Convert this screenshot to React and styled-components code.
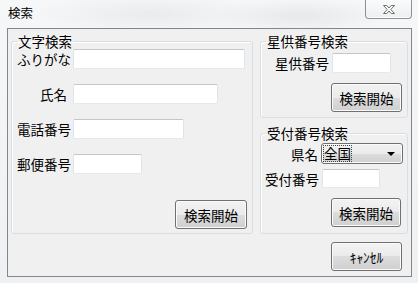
import React from "react";
import styled, { createGlobalStyle } from "styled-components";

const GlobalStyle = createGlobalStyle`
  html, body {
    margin: 0;
    padding: 0;
    background: #ffffff;
  }
  body {
    font-family: "Noto Sans CJK JP", "Noto Sans", sans-serif;
  }
`;

const Window = styled.div`
  width: 418px;
  height: 283px;
  display: flex;
  flex-direction: column;
  box-sizing: border-box;
  background:
    radial-gradient(ellipse 120px 20px at 150px 14px, #e9ebed 0%, rgba(233, 235, 237, 0) 100%),
    radial-gradient(ellipse 90px 18px at 300px 16px, #e6e8ea 0%, rgba(230, 232, 234, 0) 100%),
    linear-gradient(#f6f7f8, #eef0f2);
  font-family: "Noto Sans CJK JP", "Noto Sans", sans-serif;
  color: #000;
`;

const TitleBar = styled.div`
  height: 28px;
  display: flex;
  justify-content: space-between;
  align-items: flex-start;
  padding-left: 8px;
`;

const Title = styled.span`
  margin-top: 5px;
  font-size: 12.5px;
  line-height: 16px;
`;

const CloseButton = styled.div`
  width: 47px;
  height: 19px;
  margin-right: 6px;
  box-sizing: border-box;
  border: 1px solid #8e9094;
  border-top: none;
  border-radius: 0 0 4px 4px;
  background: linear-gradient(#fbfbfb, #eceef0);
  box-shadow: inset 0 -1px 0 #ffffff;
  display: flex;
  align-items: center;
  justify-content: center;
`;

const Client = styled.div`
  margin: 0 6px 0 7px;
  height: 249px;
  box-sizing: border-box;
  border: 1px solid #848689;
  background: #f0f0f0;
  padding: 4px 3px 0;
  display: grid;
  grid-template-columns: 242px 148px;
  grid-template-rows: 85px 109px auto;
  grid-template-areas:
    "text star"
    "text recv"
    "foot foot";
  column-gap: 7px;
  row-gap: 7px;
`;

const Group = styled.fieldset`
  grid-area: ${(p) => p.$area};
  margin: 0;
  padding: 0;
  min-width: 0;
  border: 1px solid #d5dfe5;
  border-radius: 3px;
  box-shadow: inset 1px 1px 0 #ffffff;
  display: flex;
  flex-direction: column;
`;

const Legend = styled.legend`
  margin-left: 5px;
  padding: 0 1px;
  font-size: 13.5px;
  line-height: 16px;
`;

const FormGrid = styled.div`
  display: grid;
  grid-template-columns: 56px auto;
  row-gap: 15px;
  padding-left: 5px;
  align-items: center;
`;

const Label = styled.span`
  font-size: 13.5px;
  line-height: 16px;
  white-space: nowrap;
  text-align: ${(p) => (p.$right ? "right" : "left")};
  padding-right: ${(p) => p.$padRight || 0}px;
`;

const TextBox = styled.div`
  width: ${(p) => p.$w}px;
  height: ${(p) => p.$h || 20}px;
  box-sizing: border-box;
  background: #ffffff;
  border: 1px solid;
  border-color: #c3c7cd #e2e3ea #e3e9ef #e2e3ea;
  border-radius: 2px;
`;

const Row = styled.div`
  display: flex;
  align-items: center;
  gap: ${(p) => p.$gap || 3}px;
  padding-left: ${(p) => p.$indent}px;
  margin-top: ${(p) => p.$top || 0}px;
`;

const Button = styled.div`
  width: ${(p) => p.$w}px;
  height: 29px;
  box-sizing: border-box;
  border: 1px solid #707070;
  border-radius: 3px;
  background: linear-gradient(#f2f2f2 0%, #ebebeb 50%, #dddddd 50%, #cfcfcf 100%);
  box-shadow: inset 0 0 0 1px #fbfbfb;
  display: flex;
  align-items: center;
  justify-content: center;
  font-size: 13.5px;
  line-height: 16px;
  margin-left: auto;
  margin-top: ${(p) => (p.$top === "auto" ? "auto" : `${p.$top || 0}px`)};
  margin-right: ${(p) => p.$right || 5}px;
  margin-bottom: ${(p) => p.$bottom || 0}px;
`;

const Combo = styled.div`
  width: 82px;
  height: 21px;
  box-sizing: border-box;
  border: 1px solid #707070;
  border-radius: 3px;
  background: linear-gradient(#f2f2f2 0%, #ebebeb 50%, #dddddd 50%, #cfcfcf 100%);
  box-shadow: inset 0 0 0 1px #fbfbfb;
  display: flex;
  align-items: center;
  justify-content: space-between;
  padding: 0 7px 0 2px;
`;

const ComboText = styled.span`
  font-size: 13.5px;
  line-height: 15px;
  outline: 1px dotted #444;
  outline-offset: 0;
`;

const Arrow = styled.span`
  width: 0;
  height: 0;
  border-left: 4px solid transparent;
  border-right: 4px solid transparent;
  border-top: 4px solid #000;
`;

const Footer = styled.div`
  grid-area: foot;
  display: flex;
  align-items: flex-start;
  padding-top: 1px;
`;

const CloseGlyph = () => (
  <svg width="14" height="11" viewBox="0 0 14 11">
    <path
      d="M1.5 1.5 L4.8 1.5 L7 4 L9.2 1.5 L12.5 1.5 L8.8 5.5 L12.5 9.5 L9.2 9.5 L7 7 L4.8 9.5 L1.5 9.5 L5.2 5.5 Z"
      fill="#fafafa"
      stroke="#6e6e6e"
      strokeWidth="1"
      strokeLinejoin="round"
    />
  </svg>
);

const App = () => {
  return (
    <>
      <GlobalStyle />
      <Window>
        <TitleBar>
          <Title>検索</Title>
          <CloseButton>
            <CloseGlyph />
          </CloseButton>
        </TitleBar>
        <Client>
          <Group $area="text">
            <Legend>文字検索</Legend>
            <FormGrid>
              <Label>ふりがな</Label>
              <TextBox $w={172} />
              <Label $right $padRight={6}>
                氏名
              </Label>
              <TextBox $w={145} />
              <Label>電話番号</Label>
              <TextBox $w={111} />
              <Label>郵便番号</Label>
              <TextBox $w={69} />
            </FormGrid>
            <Button $w={72} $top="auto" $right={5} $bottom={4}>
              検索開始
            </Button>
          </Group>

          <Group $area="star">
            <Legend>星供番号検索</Legend>
            <Row $indent={14} $top={4}>
              <Label>星供番号</Label>
              <TextBox $w={59} />
            </Row>
            <Button $w={71} $top={10} $right={5}>
              検索開始
            </Button>
          </Group>

          <Group $area="recv">
            <Legend>受付番号検索</Legend>
            <Row $indent={30} $top={2}>
              <Label>県名</Label>
              <Combo>
                <ComboText>全国</ComboText>
                <Arrow />
              </Combo>
            </Row>
            <Row $indent={4} $top={5}>
              <Label>受付番号</Label>
              <TextBox $w={58} $h={19} />
            </Row>
            <Button $w={70} $top={10} $right={6}>
              検索開始
            </Button>
          </Group>

          <Footer>
            <Button $w={71} $right={6}>
              ｷｬﾝｾﾙ
            </Button>
          </Footer>
        </Client>
      </Window>
    </>
  );
};

export default App;
